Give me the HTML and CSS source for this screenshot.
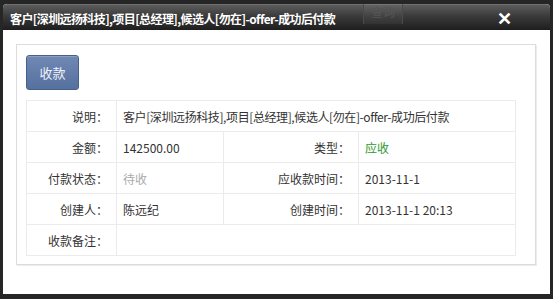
FILE: index.html
```html
<!DOCTYPE html>
<html lang="zh-CN">
<head>
    <meta charset="UTF-8">
    <title>收款</title>
    <link rel="stylesheet" href="styles.css">
</head>
<body>
    <div class="dialog">
        <!-- title bar -->
        <div class="dialog-title">
            <span class="title-text">客户[深圳远扬科技],项目[总经理],候选人[勿在]-offer-成功后付款</span>
            <span class="behind-btn">查询</span>
            <span class="close">&#x2715;</span>
        </div>

        <div class="dialog-body">
            <div class="panel">
                <button class="pay-button">收款</button>

                <table class="info-table">
                    <tr>
                        <th>说明：</th>
                        <td colspan="3" class="desc">客户[深圳远扬科技],项目[总经理],候选人[勿在]-offer-成功后付款</td>
                    </tr>
                    <tr>
                        <th>金额：</th>
                        <td class="col2">142500.00</td>
                        <th class="col3">类型：</th>
                        <td class="green">应收</td>
                    </tr>
                    <tr>
                        <th>付款状态：</th>
                        <td class="col2 muted">待收</td>
                        <th class="col3">应收款时间：</th>
                        <td>2013-11-1</td>
                    </tr>
                    <tr>
                        <th>创建人：</th>
                        <td class="col2">陈远纪</td>
                        <th class="col3">创建时间：</th>
                        <td>2013-11-1 20:13</td>
                    </tr>
                    <tr>
                        <th>收款备注：</th>
                        <td colspan="3"></td>
                    </tr>
                </table>
            </div>
        </div>
    </div>
</body>
</html>
```

FILE: styles.css
```css
body {
    margin: 0;
    background-color: #262626;
    font-family: "Noto Sans CJK SC", "Noto Sans", sans-serif;
    font-size: 12px;
    color: #333;
}

.dialog {
    margin: 4px 3px 0 3px;
    width: 547px;
    height: 290px;
    background-color: #fff;
    border-radius: 4px 4px 0 0;
    overflow: hidden;
}

.dialog-title {
    position: relative;
    height: 26px;
    background: linear-gradient(#5c5c5c, #3a3a3a 45%, #1e1e1e);
    border-top: 1px solid #707070;
    box-sizing: border-box;
    display: flex;
    align-items: center;
    padding: 1px 0 0 7px;
}

.title-text {
    color: #fff;
    font-size: 12px;
    font-weight: bold;
    letter-spacing: -0.6px;
}

.behind-btn {
    position: absolute;
    left: 360px;
    top: -5px;
    width: 38px;
    height: 24px;
    line-height: 24px;
    text-align: center;
    color: #555;
    font-size: 12px;
    border-left: 1px solid #4a4a4a;
    border-right: 1px solid #4a4a4a;
    background-color: rgba(255, 255, 255, 0.04);
}

.close {
    position: absolute;
    right: 38px;
    top: 1px;
    color: #fff;
    font-size: 18px;
    font-weight: bold;
    line-height: 22px;
}

.dialog-body {
    padding: 14px 0 0 13px;
}

.panel {
    width: 520px;
    height: 221px;
    box-sizing: border-box;
    border: 1px solid #dcdcdc;
    box-shadow: 1px 1px 0 #ececec;
    padding: 10px 9px;
}

.pay-button {
    display: block;
    width: 53px;
    height: 35px;
    border: 1px solid #46608c;
    border-radius: 3px;
    background: linear-gradient(#7088b4, #56709f);
    color: #eef2f8;
    font-family: "Noto Sans CJK SC", sans-serif;
    font-size: 13px;
    padding: 0;
    box-shadow: inset 0 1px 0 rgba(255, 255, 255, 0.2);
}

.info-table {
    margin-top: 10px;
    width: 490px;
    border-collapse: collapse;
    border: 1px solid #d8d8d8;
}

.info-table th,
.info-table td {
    height: 30px;
    border: 1px solid #ebebeb;
    padding: 0 6px;
    font-weight: normal;
}

.info-table th {
    width: 75px;
    text-align: right;
    padding-right: 8px;
}

.info-table td {
    text-align: left;
}

.info-table .desc {
    letter-spacing: -0.4px;
}

.info-table .col2 {
    width: 94px;
}

.info-table .col3 {
    width: 120px;
}

.muted {
    color: #aaa;
}

.green {
    color: #2e9a2e;
}
```
